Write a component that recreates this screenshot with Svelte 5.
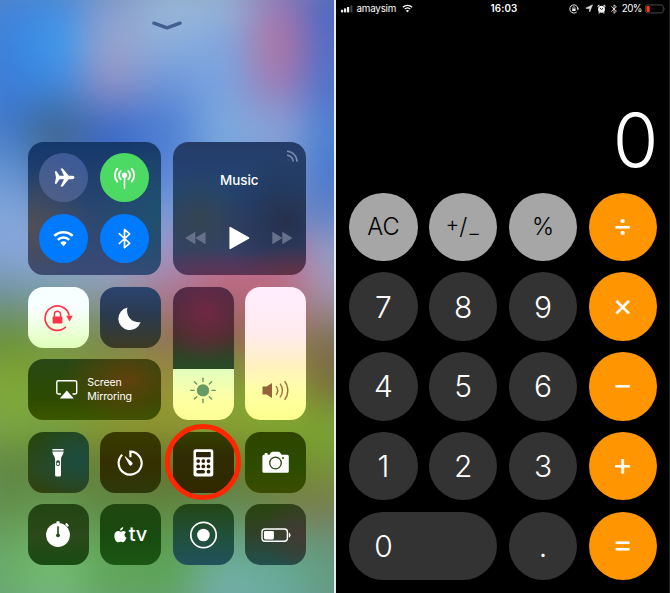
<script>
  // Coarse colour samples of the wallpaper; the grid is blurred into a soft mesh.
  const wallpaper = [
    ['#4782d8', '#4387dc', '#8299cd', '#9ab8d6', '#9bb6d6', '#9479b8', '#4864c2'],
    ['#3a80dc', '#3c9aec', '#9aa5ce', '#8fb0dc', '#7ea6de', '#b4749f', '#4d6bc8'],
    ['#3b7bda', '#3d87e0', '#9390c2', '#6a94d8', '#7aa3e0', '#9d7cb6', '#4a70cb'],
    ['#4078cc', '#3f6488', '#3a6ac8', '#4a7cd2', '#7caade', '#88a4d8', '#4a7fd2'],
    ['#6496d8', '#4a74a8', '#3e6cc8', '#5884d6', '#74a4de', '#8098cc', '#4376d0'],
    ['#84a9e0', '#7c98c4', '#6488c8', '#7a9cd8', '#7490c8', '#7086bc', '#5a80c8'],
    ['#86a6dc', '#8aa6dc', '#94a6d8', '#a095c4', '#c47494', '#bd6f91', '#98a2cc'],
    ['#6f9198', '#7b9ca0', '#8a96a0', '#b0748c', '#b4657a', '#bc687c', '#a295ae'],
    ['#68902f', '#779446', '#768648', '#8d7454', '#8c6450', '#9c7655', '#7a6f50'],
    ['#80a935', '#80a43a', '#93963a', '#9b9038', '#7f9c34', '#8fa238', '#79633a'],
    ['#7da83e', '#78a542', '#8a9930', '#91992f', '#8da533', '#80a92f', '#7ba630'],
    ['#60863f', '#5f8145', '#687b32', '#656f30', '#66752e', '#6f8a30', '#789532'],
    ['#628f4a', '#659a50', '#5e8845', '#60883f', '#5f8d55', '#748050', '#7c7850'],
    ['#68a966', '#72b96d', '#5fa456', '#5ba052', '#6aa890', '#64a58c', '#64977a'],
    ['#68ad68', '#75bc78', '#62a75e', '#5fa65d', '#75b2ad', '#6aaf9f', '#629c80']
  ];

  const keys = [
    { t: 'AC', k: 'fn' }, { t: '±', k: 'fn' }, { t: '%', k: 'fn' }, { t: '÷', k: 'op' },
    { t: '7' }, { t: '8' }, { t: '9' }, { t: '×', k: 'op' },
    { t: '4' }, { t: '5' }, { t: '6' }, { t: '−', k: 'op' },
    { t: '1' }, { t: '2' }, { t: '3' }, { t: '+', k: 'op' },
    { t: '0', k: 'zero' }, { t: '.' }, { t: '=', k: 'op' }
  ];

  const rays = [0, 45, 90, 135, 180, 225, 270, 315];
</script>

{#snippet bluetooth()}
  <path d="M-5.2-4.9 5.2 4.8 0 9.2V-9L5.2-4.7-5.2 5" fill="none" stroke="#fff" stroke-width="1.7" stroke-linejoin="round" stroke-linecap="round" />
{/snippet}

{#snippet wifi()}
  <g fill="none" stroke="#fff" stroke-width="2.5">
    <path d="M-9.2-2.6A13.2 13.2 0 0 1 9.2-2.6" />
    <path d="M-5.7 1.3A8.4 8.4 0 0 1 5.7 1.3" />
  </g>
  <path d="M-3.2 4.3A4.8 4.8 0 0 1 3.2 4.3L0 7.7Z" fill="#fff" />
{/snippet}

<main>
  <section class="control">
    <div class="mesh">
      {#each wallpaper as row}
        {#each row as c}<i style="background:{c}"></i>{/each}
      {/each}
    </div>

    <svg class="chevron" width="30" height="10" viewBox="0 0 30 10"><path d="M2 2.2 15 6.8 28 2.2" fill="none" stroke="#435f92" stroke-width="3.5" stroke-linecap="round" stroke-linejoin="round" /></svg>

    <div class="tiles">
      <div class="tile big conn">
        <div class="round plane"><svg viewBox="-24.5 -24.5 49 49"><path fill="#fff" d="M-8.7-6.2H-7L-4-1.7H.5L-3-9H-.8L5.2-1.7H8.8Q11-1.4 11 0 11 1.5 8.8 1.7H5.2L-.8 9H-3L.5 1.7H-4L-7 6.2H-8.7L-7.5 0Z" /></svg></div>
        <div class="round cell"><svg viewBox="-24.5 -24.5 49 49">
          <circle cy="-2.3" r="2.7" fill="#fff" />
          <g fill="none" stroke="#fff" stroke-width="1.9" stroke-linecap="round">
            <path d="M0-1V10.7" stroke-width="1.5" />
            <path d="M-3.8-6.4A5.6 5.6 0 0 0-3.8 1.7M3.8-6.4A5.6 5.6 0 0 1 3.8 1.7M-7.2-8.8A9.8 9.8 0 0 0-7.2 4.1M7.2-8.8A9.8 9.8 0 0 1 7.2 4.1" />
          </g></svg></div>
        <div class="round blue"><svg viewBox="-24.5 -24.5 49 49">{@render wifi()}</svg></div>
        <div class="round blue"><svg viewBox="-24.5 -24.5 49 49">{@render bluetooth()}</svg></div>
      </div>

      <div class="tile big music">
        <svg class="cast" width="14" height="14" viewBox="0 0 14 14"><g fill="none" stroke="#7d8cac" stroke-width="1.5"><path d="M2 1.2A10.4 10.4 0 0 1 12 11.8M2 5.2A6.5 6.5 0 0 1 8.2 11.5" /></g><circle cx="3.3" cy="10" r="1.2" fill="#506286" opacity=".3" /></svg>
        <span class="title">Music</span>
        <div class="transport">
          <svg width="21" height="14" viewBox="0 0 21 14"><path d="M0 7 10.3.7V13.3ZM10.3 7 20.6.7V13.3Z" fill="#66708a" /></svg>
          <svg width="21" height="24" viewBox="0 0 21 24"><path d="M1.2 1.6 19.5 12 1.2 22.4Z" fill="#fff" stroke="#fff" stroke-width="1.6" stroke-linejoin="round" /></svg>
          <svg width="21" height="14" viewBox="0 0 21 14"><path d="M.3.7 10.3 7 .3 13.3ZM10.3.7 20.6 7 10.3 13.3Z" fill="#66708a" /></svg>
        </div>
      </div>

      <div class="tile lock"><svg viewBox="0 0 61 61">
        <path d="M37.8 39.9A12.2 12.2 0 1 1 41.2 28.5" fill="none" stroke="#ff3347" stroke-width="1.7" />
        <path d="M38.2 28.8H44.8L41.5 34.6Z" fill="#ff3347" />
        <rect x="24.6" y="29.6" width="9.8" height="7" rx="1" fill="#ff3347" />
        <path d="M26.4 30V27.4A3.1 3.1 0 0 1 32.6 27.4V30" fill="none" stroke="#ff3347" stroke-width="1.5" />
      </svg></div>
      <div class="tile moon"><svg viewBox="0 0 61 61"><path fill="#fff" d="M27.4 20.5A11.4 11.4 0 1 0 40.6 35 11.6 11.6 0 0 1 27.4 20.5Z" /></svg></div>

      <div class="tile slider bright">
        <div class="level"></div>
        <svg viewBox="0 0 61 133"><circle cx="30" cy="103.2" r="6.2" fill="#679a62" />
          {#each rays as a}<path transform="rotate({a} 30 103.2)" d="M30 94.3V91" stroke="#679a62" stroke-width="1.4" stroke-linecap="round" />{/each}
        </svg>
      </div>
      <div class="tile slider volume"><svg viewBox="0 0 61 133">
        <path d="M17.5 99.3H21.6L27 95.7V110.8L21.6 107.2H17.5Z" fill="#956339" />
        <path d="M31 98.9A7 7 0 0 1 31 107.7M35 96.4A11 11 0 0 1 35 110.2M39.6 93.9A15.5 15.5 0 0 1 39.6 112.7" fill="none" stroke="#a36c42" stroke-width="1.4" />
      </svg></div>

      <div class="tile mirror">
        <svg width="22" height="20" viewBox="0 0 22 20"><path d="M5 14H2.2A1.4 1.4 0 0 1 .8 12.6V2.2A1.4 1.4 0 0 1 2.2.8H19.3A1.4 1.4 0 0 1 20.7 2.2V12.6A1.4 1.4 0 0 1 19.3 14H16.5" fill="none" stroke="#fff" stroke-width="1.4" /><path d="M10.8 10.4 17.8 18.6H3.8Z" fill="#fff" /></svg>
        <span>Screen<br />Mirroring</span>
      </div>

      <div class="tile torch"><svg viewBox="0 0 61 61">
        <path fill="#fff" d="M24.4 17H35.6V18.6H24.4ZM24.4 19.6H35.6C35.6 23.2 33 24 33 27.5V43.2Q33 44.6 31.7 44.6H28.4Q27.1 44.6 27.1 43.2V27.5C27.1 24 24.4 23.2 24.4 19.6Z" />
        <rect x="28.2" y="28.2" width="3.7" height="5.8" rx="1.8" fill="#1c422e" /><circle cx="30" cy="31.8" r="1.2" fill="#fff" />
      </svg></div>
      <div class="tile timer"><svg viewBox="0 0 61 61">
        <path d="M22.2 22.8A11.5 11.5 0 1 0 30.4 19.6V25.3" fill="none" stroke="#fff" stroke-width="2.2" />
        <path d="M25 24.6 32 30.6A1.7 1.7 0 0 1 29.6 32.9Z" fill="#fff" stroke="#fff" stroke-width=".7" stroke-linejoin="round" />
      </svg></div>
      <div class="tile calc"><svg viewBox="0 0 61 61">
        <rect x="20.5" y="17.3" width="19.8" height="27.2" rx="2.2" fill="#fff" />
        <g fill="#2c2408"><rect x="23" y="20" width="14.8" height="5.3" rx=".7" />
          {#each [29.1, 34.4] as y}{#each [25.2, 30.3, 35.5] as x}<circle cx={x} cy={y} r="1.9" />{/each}{/each}
          <circle cx="35.5" cy="39.7" r="1.9" /><rect x="23.3" y="38" width="8.8" height="3.5" rx="1.7" />
        </g>
      </svg></div>
      <div class="tile camera"><svg viewBox="0 0 61 61">
        <path fill="#fff" d="M19.6 22.7V21.9Q19.6 21.1 20.4 21.1H21.9Q22.7 21.1 22.7 21.9V22.7H24.4L26 20.4Q26.5 19.7 27.4 19.7H33.6Q34.5 19.7 35 20.4L36.6 22.7H42.2Q43.8 22.7 43.8 24.2V39.2Q43.8 40.7 42.2 40.7H19Q17.4 40.7 17.4 39.2V24.2Q17.4 22.7 19 22.7Z" />
        <circle cx="30.5" cy="31" r="5.8" fill="none" stroke="#284600" stroke-width="1.3" /><circle cx="38" cy="26" r="1" fill="#284600" />
      </svg></div>

      <div class="tile stop"><svg viewBox="0 0 61 61">
        <circle cx="30" cy="31" r="11.9" fill="#fff" /><rect x="28.4" y="17.2" width="3.2" height="3" rx=".8" fill="#fff" />
        <rect x="37.2" y="19.8" width="3.6" height="2.2" rx=".7" transform="rotate(45 39 20.9)" fill="#fff" />
        <path d="M30 22.2V31" stroke="#254d16" stroke-width="1.6" /><circle cx="30" cy="31.3" r="1.9" fill="#254d16" />
      </svg></div>
      <div class="tile tv">
        <svg width="13" height="16" viewBox="0 0 13 16"><path fill="#fff" d="M9.2 0C9.4 1.7 7.8 3.7 6 3.6 5.9 1.9 7.5.2 9.2 0ZM6.4 4.7C7.1 4.7 8 3.9 9.4 3.9 10.5 3.9 11.5 4.5 12 5.3 9.8 6.6 10.2 9.8 12.5 10.8 11.8 12.9 10.4 15.3 9 15.3 8 15.3 7.7 14.7 6.5 14.7 5.3 14.7 4.9 15.3 4 15.3 2.2 15.3.3 11.7.3 9 .3 5.8 2.3 4 4.2 4 5.2 4 5.8 4.7 6.4 4.7Z" /></svg>
        <span>tv</span>
      </div>
      <div class="tile record"><svg viewBox="0 0 61 61"><circle cx="30.5" cy="31" r="12.7" fill="none" stroke="#fff" stroke-width="1.7" /><circle cx="30.4" cy="31" r="6.3" fill="#fff" /></svg></div>
      <div class="tile power"><svg viewBox="0 0 61 61"><rect x="17" y="25" width="25.4" height="12.3" rx="3" fill="none" stroke="#fff" stroke-width="1.4" /><rect x="19" y="26.9" width="9.9" height="8.5" rx="1.3" fill="#fff" /><path d="M43.8 28.6Q45.5 29.5 45.5 31.2T43.8 33.8Z" fill="#fff" /></svg></div>
    </div>
    <div class="ring"></div>
  </section>

  <section class="phone">
    <header>
      <div class="left">
        <svg width="12" height="8" viewBox="0 0 12 8" fill="#eee"><rect y="4.8" width="2.2" height="2.6" /><rect x="3" y="3.4" width="2.2" height="4" /><rect x="6" y="2" width="2.2" height="5.4" /><rect x="9.4" y=".4" width="2" height="7" fill="#444" /></svg>
        <span class="carrier">amaysim</span>
        <svg width="11" height="9" viewBox="-11 -9 22 18">{@render wifi()}</svg>
      </div>
      <b>16:03</b>
      <div class="right">
        <svg width="10" height="10" viewBox="0 0 10 10"><path d="M7.7 8A4.1 4.1 0 1 1 9 4.4" fill="none" stroke="#eee" /><path d="M7.7 4.3H10L8.9 6.4Z" fill="#eee" /><rect x="3.2" y="4.5" width="3.4" height="2.5" fill="#eee" /><path d="M3.8 4.5V3.7A1.1 1.1 0 0 1 6 3.7V4.5" fill="none" stroke="#eee" stroke-width=".7" /></svg>
        <svg class="loc" width="8" height="9" viewBox="0 0 8 9"><path d="M7.4.9 4.6 7.8V4.4L.8 4.2Z" fill="#ddd" stroke="#ddd" stroke-width=".7" /></svg>
        <svg class="alarm" width="9" height="10" viewBox="0 0 9 10"><circle cx="4.5" cy="5.3" r="3.5" fill="#eee" /><path d="M.6 2.6 2.4.9M8.4 2.6 6.6.9M1.6 9.3 2.6 8.3M7.4 9.3 6.4 8.3" stroke="#eee" stroke-width="1.2" /><path d="M3 4 4.5 5.6 6 4.2" stroke="#000" stroke-width=".8" fill="none" /></svg>
        <svg class="bt" width="6" height="10" viewBox="-6.5 -10 13 20">{@render bluetooth()}</svg>
        <span class="pct">20%</span>
        <svg class="bat" width="21" height="10" viewBox="0 0 21 10"><rect x=".6" y=".9" width="17.6" height="8" rx="1.8" fill="none" stroke="#484848" /><rect x="1.5" y="1.9" width="3.2" height="6" rx=".7" fill="#ff3126" /><path d="M19 3.3Q20.2 4.9 19 6.5" fill="#555" /></svg>
      </div>
    </header>
    <div class="display">0</div>
    <div class="pad">
      {#each keys as { t, k }}
        <button class={k ?? 'num'}>
          {#if t === '±'}<span class="pm"><sup>+</sup><i>/</i><sub>−</sub></span>{:else}{t}{/if}
        </button>
      {/each}
    </div>
  </section>
</main>

<style>
  :global(body) { margin: 0; }
  main {
    display: flex; width: 670px; height: 593px; overflow: hidden; background: #e3ebf1;
    font-family: Inter, Roboto, "Liberation Sans", sans-serif; color: #fff;
  }
  svg { display: block; flex: none; }

  .control { position: relative; width: 334px; margin-right: 2px; overflow: hidden; isolation: isolate; background: #7090a0; }
  .mesh {
    position: absolute; z-index: -1; inset: -21px -28px;
    display: grid; grid-template-columns: repeat(7, 1fr); grid-template-rows: repeat(15, 1fr);
    filter: blur(20px);
  }
  .chevron { margin: 20.8px auto 0; }
  .tiles {
    display: grid; grid-template-columns: repeat(4, 61px); grid-template-rows: repeat(6, 61px);
    gap: 11.4px; padding: 111.3px 0 0 27.8px;
  }
  .tile { border-radius: 15.5px; overflow: hidden; }
  .tile > svg { width: 100%; }
  .big { grid-column: span 2; grid-row: span 2; }
  .conn {
    box-sizing: border-box; padding: 11.4px 11.7px; display: grid; grid-template-columns: 49px 49px; grid-template-rows: 49px 49px; gap: 12px;
    background: radial-gradient(ellipse 50% 45% at 0 65%, #514f56, transparent), radial-gradient(ellipse 50% 60% at 100% 55%, #1d506f, transparent), linear-gradient(#15386b, #2b4770 55%, #3b4a78);
  }
  .round { border-radius: 50%; }
  .plane { background: linear-gradient(25deg, #526086, #38599b); }
  .cell { background: #4cd964; }
  .blue { background: #007aff; }
  .music {
    display: flex; flex-direction: column;
    background: radial-gradient(ellipse 60% 25% at 30% 105%, #692f50, transparent), radial-gradient(ellipse 55% 25% at 90% 103%, #6c3040, transparent), radial-gradient(circle at 85% 60%, #26304c, transparent 50%), radial-gradient(circle at 20% 60%, #344450, transparent 40%), linear-gradient(#263c68, #214676 40%, #3b4068 90%);
  }
  .music .cast { width: 14px; margin: 7.7px 7px 0 auto; }
  .title { font-size: 13.4px; line-height: 18px; font-weight: 500; text-align: center; margin: 7.5px 0 0; }
  .transport { display: flex; justify-content: space-between; align-items: center; margin-top: 37px; padding: 0 12.5px; }
  .lock { background: linear-gradient(#f8ffff 35%, #eaffd4 75%, #e0ffb8); }
  .moon { background: linear-gradient(#2b4470, #2a3a50 45%, #3d3b22); }
  .slider { grid-row: span 2; position: relative; }
  .bright { background: radial-gradient(ellipse 75% 35% at 55% 20%, #702842, transparent), linear-gradient(#4a2c4c, #44302b 35%, #284b26 60%); }
  .level { position: absolute; inset: 82.5px 0 0; background: linear-gradient(#e4ffc0, #ffffa0 65%, #fbff96); }
  .slider svg { position: relative; height: 133.4px; }
  .volume { background: linear-gradient(#ffedff, #ffebee 35%, #fff1bf 60%, #ffffa5 78%, #fdff8c); }
  .mirror {
    grid-column: span 2; display: flex; align-items: center;
    background: radial-gradient(ellipse 50% 75% at 75% 35%, #60410b, transparent), linear-gradient(#284817, #2d4b00 65%, #3c5700);
  }
  .mirror svg { width: 22px; margin: 0 9.5px 0 28px; }
  .mirror span { font-size: 10.6px; line-height: 14.4px; margin-top: 1px; letter-spacing: -.15px; }
  .torch { background: radial-gradient(circle at 80% 45%, #1c4c40, transparent 75%), linear-gradient(#27460d, #2b4820 60%, #30420f); }
  .timer { background: linear-gradient(#383c00, #352f00 50%, #2d390b); }
  .calc { background: linear-gradient(#344000, #302b04 40%, #302900); }
  .camera { background: linear-gradient(#2f4400, #2c4c00 55%, #3c4c00); }
  .stop { background: linear-gradient(#224512, #2b491a 50%, #194b12); }
  .tv { display: flex; align-items: center; background: linear-gradient(#214610, #184a10 50%, #1d5714); }
  .tv svg { width: 13px; margin: 0 2px 0 13.6px; }
  .tv span { font-size: 20px; line-height: 22px; font-weight: 500; margin-top: -1.5px; letter-spacing: -.2px; }
  .record { background: linear-gradient(#244615, #205038 50%, #21525d); }
  .power { background: radial-gradient(circle at 90% 50%, #423b35, transparent 60%), linear-gradient(#2a450e, #31412a 50%, #21514e); }
  .ring { position: absolute; left: 165px; top: 424.3px; width: 65.5px; height: 65.5px; border: 5.6px solid #ff2600; border-radius: 50%; }

  .phone { width: 334px; background: #000; display: flex; flex-direction: column; box-sizing: border-box; border-right: 1px solid #202020; }
  header { display: grid; grid-template-columns: 1fr auto 1fr; align-items: center; height: 17px; padding: 0 3px 0 5px; font-size: 9.8px; line-height: 14px; }
  header b { font-weight: 600; letter-spacing: .15px; margin-left: 1px; }
  .left, .right { display: flex; align-items: center; }
  .right { justify-content: flex-end; }
  .carrier { margin: 0 5.5px 0 3.5px; letter-spacing: -.2px; }
  .loc { margin-left: 5.5px; }
  .alarm { margin-left: 4px; }
  .bt { margin: 0 5px 0 5px; }
  .pct { letter-spacing: -.5px; }
  .bat { margin-left: 3px; }
  .display { height: 96.6px; margin: 79px 12px 0 0; line-height: 89px; text-align: right; font-size: 74px; font-weight: 300; letter-spacing: -1.5px; }
  .pad { display: grid; grid-template-columns: repeat(4, 68.5px); grid-auto-rows: 68.5px; gap: 11.3px; padding-left: 13.2px; }
  button { border: 0; padding: 0; border-radius: 35px; font: 350 30px/68px Inter, Roboto, sans-serif; color: #fff; background: #333; text-align: center; }
  .fn { background: #a6a6a6; color: #000; font-size: 23.6px; }
  .op { background: #ff9500; font-size: 31px; font-weight: 400; padding-bottom: 4px; line-height: 64px; }
  .zero { grid-column: span 2; text-align: left; padding-left: 25px; }
  .pm { display: inline-flex; align-items: center; font-size: 23px; }
  .pm i { font-style: normal; line-height: 28px; }
  .pm sup, .pm sub { font-size: 21px; line-height: 1; }
  .pm sup { transform: translateY(-4px); }
  .pm sub { transform: translateY(5px); }
</style>
